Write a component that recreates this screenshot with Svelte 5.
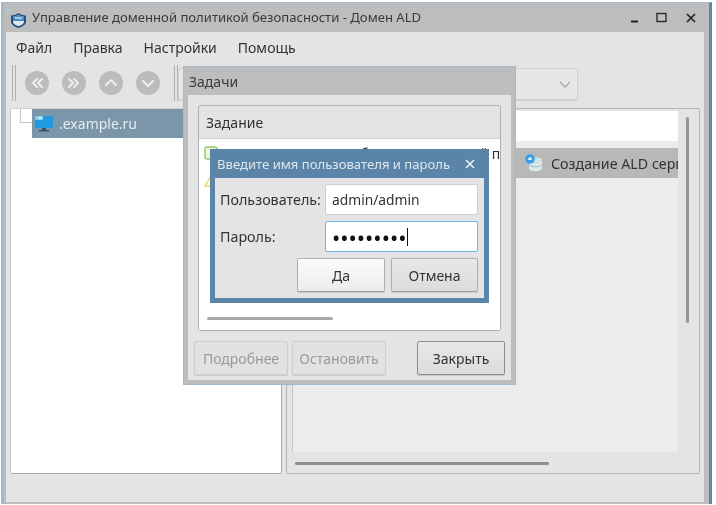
<script>
  const toolButtons = [
    'M12 8l-4 4 4 4M17 8l-4 4 4 4',
    'M7 8l4 4-4 4M12 8l4 4-4 4',
    'M7 14l5-5 5 5',
    'M7 10l5 5 5-5'
  ];
</script>

<div class="screen">
  <div class="window">
    <header class="titlebar">
      <svg class="app-icon" viewBox="0 0 22 22" width="22" height="22">
        <path d="M7 8.500c3 0 5.500-1 7.500-2.500 2 1.500 4.500 2.500 7.500 2.500v6c0 3-3 5-7.500 6.500C10 19.500 7 17.500 7 14.500z" fill="#254f80" />
        <path d="M9 9.500c2.500 0 4-.8 5.500-1.800 1.500 1 3 1.800 5.500 1.800v5c0 2-2 3.600-5.500 4.800C11 18.100 9 16.500 9 14.500z" fill="#dbe8f2" />
        <path d="M9 9.500c2.500 0 4-.8 5.500-1.800 1.500 1 3 1.800 5.500 1.800V14H9z" fill="#4a8cc4" />
        <path d="M11 11h7" stroke="#e8f1f8" stroke-width="1.200" />
        <path d="M3.500 1l.9 2 2.100.6-2.100.8-.9 2.100-.9-2.100L.5 3.600l2.100-.6z" fill="#9fd3ee" />
      </svg>
      <span class="title">Управление доменной политикой безопасности - Домен ALD</span>
      <div class="controls">
        <svg viewBox="0 0 12 12" width="12" height="12"><path d="M4 9.500h7" stroke="#222" stroke-width="2" /></svg>
        <svg viewBox="0 0 12 12" width="12" height="12"><rect x="1" y="1.500" width="9" height="8" fill="none" stroke="#222" stroke-width="1.300" /></svg>
        <svg viewBox="0 0 12 12" width="12" height="12"><path d="M2 2l8 8M10 2l-8 8" stroke="#222" stroke-width="1.700" /></svg>
      </div>
    </header>

    <div class="content">
      <nav class="menu">
        <span>Файл</span><span>Правка</span><span>Настройки</span><span>Помощь</span>
      </nav>

      <div class="toolbar">
        <i class="handle"></i>
        <div class="tool-buttons">
          {#each toolButtons as d}
            <svg viewBox="0 0 24 24" width="24" height="24">
              <circle cx="12" cy="12" r="12" fill="#bcbcbc" />
              <path {d} fill="none" stroke="#eeeeee" stroke-width="2" stroke-linecap="round" stroke-linejoin="round" />
            </svg>
          {/each}
        </div>
        <i class="handle"></i>
        <div class="combo">
          <svg viewBox="0 0 12 7" width="12" height="7"><path d="M1 1l5 5 5-5" fill="none" stroke="#a8a8a8" stroke-width="1.300" /></svg>
        </div>
      </div>

      <div class="panes">
        <section class="tree">
          <div class="branch"></div>
          <div class="tree-row">
            <svg viewBox="0 0 18 18" width="18" height="18">
              <rect x="0" y="1" width="18" height="12" rx="1" fill="#1f9ade" />
              <rect x="0" y="1" width="8" height="4" fill="#7ccbf2" />
              <path d="M3 3h4M5 1.500v3" stroke="#e8f6fd" stroke-width="1" />
              <rect x="7" y="13" width="4" height="2" fill="#35536b" />
              <rect x="4" y="15" width="10" height="1.500" fill="#35536b" />
            </svg>
            <span>.example.ru</span>
          </div>
        </section>
        <section class="detail">
          <div class="viewport">
            <div class="row-blank"></div>
            <div class="row-selected">
              <svg viewBox="0 0 18 18" width="18" height="18">
                <ellipse cx="10.500" cy="6" rx="6.500" ry="2.700" fill="#d4e2e6" />
                <path d="M4 6v8.500c0 1.600 2.900 2.800 6.500 2.800s6.500-1.200 6.500-2.800V6c0 1.600-2.900 2.800-6.500 2.800S4 7.600 4 6z" fill="#dce8ea" />
                <path d="M4 10c0 1.600 2.900 2.800 6.500 2.800S17 11.600 17 10" fill="none" stroke="#a8bcc2" />
                <circle cx="5" cy="5" r="4.800" fill="#3a9fe8" />
                <path d="M5 2.800l2.400 3H2.600z" fill="#fff" />
              </svg>
              <span>Создание ALD серв</span>
            </div>
          </div>
          <div class="v-track"><i></i></div>
          <div class="h-track"><i></i></div>
        </section>
      </div>
    </div>
  </div>

  <div class="tasks">
    <div class="dialog-title">Задачи</div>
    <div class="tasks-body">
      <div class="group">
        <div class="group-head">Задание</div>
        <div class="group-list">
          <div class="task-row">
            <svg viewBox="0 0 14 14" width="14" height="14"><rect x="1" y="1" width="12" height="12" rx="2" fill="#eef6e4" stroke="#9cc86c" stroke-width="1.500" /></svg>
            <span>Дополнительная и обмен настроенной политики</span>
          </div>
          <div class="task-row">
            <svg viewBox="0 0 14 14" width="14" height="14"><path d="M7 2l6 10H1z" fill="#fff" stroke="#ecd25a" stroke-width="1.300" /></svg>
          </div>
          <div class="task-scroll"><i></i></div>
        </div>
      </div>
      <div class="task-buttons">
        <button class="btn off">Подробнее</button>
        <button class="btn off">Остановить</button>
        <button class="btn close">Закрыть</button>
      </div>
    </div>
  </div>

  <div class="login">
    <div class="login-title">
      <span>Введите имя пользователя и пароль</span>
      <svg viewBox="0 0 12 12" width="12" height="12"><path d="M2 2l8 8M10 2l-8 8" stroke="#f2f6f9" stroke-width="1.500" /></svg>
    </div>
    <div class="login-body">
      <div class="field">
        <span class="label">Пользователь:</span>
        <div class="input">admin/admin</div>
      </div>
      <div class="field">
        <span class="label">Пароль:</span>
        <div class="input focus"><span class="dots">•••••••••</span><i class="caret"></i></div>
      </div>
      <div class="login-buttons">
        <button class="btn light">Да</button>
        <button class="btn">Отмена</button>
      </div>
    </div>
  </div>
</div>

<style>
  :global(body) {
    margin: 0;
    background: #fff;
  }
  .screen {
    position: relative;
    width: 716px;
    height: 505px;
    overflow: hidden;
    padding: 2px 4px 0 1px;
    box-sizing: border-box;
    font-family: "Noto Sans", sans-serif;
    font-size: 14px;
    color: #333;
    filter: blur(0.45px);
  }
  .window {
    height: 502px;
    box-sizing: border-box;
    background: #bdbdbd;
    border: 1px solid #a4bacb;
    border-left: 3px solid #a4bacb;
    border-right: 3px solid #5d88aa;
    border-bottom: none;
    display: flex;
    flex-direction: column;
  }
  .titlebar {
    height: 29px;
    flex: none;
    display: flex;
    align-items: center;
    padding-right: 12px;
    gap: 6px;
  }
  .app-icon {
    flex: none;
  }
  .title {
    flex: 1;
    white-space: nowrap;
    font-size: 13.080px;
    color: #3a3a3a;
    margin-top: -1px;
  }
  .controls {
    display: flex;
    gap: 17px;
    align-items: center;
  }
  .content {
    flex: 1;
    background: #e4e4e4;
    margin: 0 5px 2px 2px;
    display: flex;
    flex-direction: column;
  }
  .menu {
    height: 30px;
    flex: none;
    display: flex;
    align-items: center;
    padding-left: 10px;
    gap: 21px;
  }
  .toolbar {
    height: 41px;
    flex: none;
    display: flex;
    align-items: center;
    padding-left: 6px;
    margin-bottom: 5px;
  }
  .handle {
    width: 2px;
    height: 36px;
    border-left: 1px solid #b0b0b0;
    border-right: 1px solid #b0b0b0;
    flex: none;
  }
  .tool-buttons {
    display: flex;
    gap: 13px;
    padding: 0 14px 0 9px;
  }
  .combo {
    width: 400px;
    height: 32px;
    margin-top: 3px;
    box-sizing: border-box;
    border: 1px solid #d2d2d2;
    border-radius: 3px;
    background: #e7e7e7;
    display: flex;
    align-items: center;
    justify-content: flex-end;
    padding-right: 6px;
    box-shadow: 0 1px 1px #ccc;
  }
  .panes {
    display: flex;
    gap: 4px;
    height: 366px;
    padding: 0 4px;
    flex: none;
  }
  .tree {
    position: relative;
    width: 272px;
    flex: none;
    background: #fff;
    border-bottom: 1px solid #aaa;
    border-right: 1px solid #aaa;
    border-left: 1px solid #c4c4c4;
    border-top: 1px solid #d0d0d0;
    border-radius: 2px;
    box-sizing: border-box;
  }
  .branch {
    position: absolute;
    left: 9px;
    top: 0;
    width: 11px;
    height: 13px;
    border-left: 1px solid #c4c4c4;
    border-bottom: 1px solid #c4c4c4;
  }
  .tree-row {
    margin-left: 21px;
    height: 29px;
    background: #7b95a9;
    color: #e6edf2;
    display: flex;
    align-items: center;
    gap: 6px;
    padding-left: 3px;
  }
  .tree-row svg,
  .row-selected svg,
  .task-row svg {
    flex: none;
  }
  .detail {
    flex: 1;
    position: relative;
    box-sizing: border-box;
    border: 1px solid #b5b5b5;
    border-radius: 2px;
    padding: 2px 0 0 5px;
    background: #e4e4e4;
  }
  .viewport {
    width: 386px;
    height: 341px;
    background: #ececec;
    border-left: 1px solid #c4c4c4;
    box-sizing: border-box;
  }
  .row-blank {
    height: 30px;
    background: #fff;
  }
  .row-selected {
    margin-top: 7px;
    height: 30px;
    background: #b8b8b8;
    display: flex;
    align-items: center;
    padding-left: 232px;
    gap: 8px;
    white-space: nowrap;
    overflow: hidden;
    font-size: 14.250px;
  }
  .v-track {
    position: absolute;
    right: 10px;
    top: 8px;
  }
  .v-track i {
    display: block;
    width: 3px;
    height: 206px;
    border-radius: 2px;
    background: #959595;
  }
  .h-track {
    position: absolute;
    left: 8px;
    bottom: 8px;
  }
  .h-track i {
    display: block;
    width: 254px;
    height: 3px;
    border-radius: 2px;
    background: #8f8f8f;
  }
  .tasks {
    position: absolute;
    left: 183px;
    top: 66px;
    width: 333px;
    height: 319px;
    box-sizing: border-box;
    background: #bdbdbd;
    border: 1px solid #a4bacb;
    display: flex;
    flex-direction: column;
    padding: 0 4px 4px;
  }
  .dialog-title {
    height: 28px;
    flex: none;
    display: flex;
    align-items: center;
    padding-left: 1px;
    color: #3a3a3a;
  }
  .tasks-body {
    flex: 1;
    background: #e4e4e4;
    padding: 10px 6px 5px;
    display: flex;
    flex-direction: column;
    gap: 10px;
  }
  .group {
    margin: 0 4px;
    height: 226px;
    box-sizing: border-box;
    flex: none;
    border: 1px solid #b0b0b0;
    border-radius: 2px;
    display: flex;
    flex-direction: column;
  }
  .group-head {
    height: 32px;
    flex: none;
    display: flex;
    align-items: center;
    padding-left: 7px;
    border-bottom: 1px solid #d0d0d0;
  }
  .group-list {
    flex: 1;
    background: #fff;
    overflow: hidden;
    padding-left: 5px;
    display: flex;
    flex-direction: column;
    position: relative;
  }
  .task-row {
    height: 28px;
    flex: none;
    display: flex;
    align-items: center;
    gap: 3px;
    white-space: nowrap;
  }
  .task-scroll {
    position: absolute;
    left: 8px;
    bottom: 10px;
  }
  .task-scroll i {
    display: block;
    width: 126px;
    height: 3px;
    border-radius: 2px;
    background: #a8a8a8;
  }
  .task-buttons {
    display: flex;
    gap: 4px;
  }
  .btn {
    font: inherit;
    color: #333;
    height: 34px;
    box-sizing: border-box;
    border: 1px solid #b0b0b0;
    border-bottom-color: #9c9c9c;
    border-radius: 2px;
    background: linear-gradient(#e8e8e8, #dcdcdc);
    padding: 0;
    box-shadow: 0 1px 1px #c8c8c8;
  }
  .btn.off {
    width: 94px;
    color: #9a9a9a;
    border-color: #cdcdcd;
    background: #e2e2e2;
  }
  .btn.close {
    width: 88px;
    margin-left: auto;
    border-color: #8e8e8e;
  }
  .btn.light {
    background: linear-gradient(#fbfbfb, #ececec);
    width: 88px;
  }
  .login {
    position: absolute;
    left: 210px;
    top: 149px;
    width: 279px;
    height: 154px;
    box-sizing: border-box;
    background: #5a85a8;
    padding: 0 5px 5px;
    display: flex;
    flex-direction: column;
  }
  .login-title {
    height: 29px;
    flex: none;
    display: flex;
    align-items: center;
    justify-content: space-between;
    padding: 0 8px 0 2px;
    color: #dbe6ee;
    font-size: 13.100px;
  }
  .login-body {
    flex: 1;
    background: #e4e4e4;
    padding: 6px 6px 0 5px;
    display: flex;
    flex-direction: column;
  }
  .field {
    display: flex;
    align-items: center;
    height: 31px;
    margin-bottom: 6px;
    gap: 4px;
  }
  .label {
    width: 101px;
    flex: none;
    white-space: nowrap;
    font-size: 14.300px;
  }
  .input {
    width: 153px;
    flex: none;
    height: 31px;
    box-sizing: border-box;
    background: #fff;
    border: 1px solid #cfcfcf;
    border-radius: 2px;
    display: flex;
    align-items: center;
    padding-left: 6px;
    font-size: 13.800px;
  }
  .input.focus {
    border-color: #6fb9e6;
  }
  .dots {
    color: #111;
    font-size: 22px;
    line-height: 1;
  }
  .caret {
    width: 1px;
    height: 18px;
    background: #111;
    margin-left: 1px;
  }
  .login-buttons {
    display: flex;
    justify-content: flex-end;
    gap: 6px;
  }
  .login-buttons .btn:last-child {
    width: 87px;
  }
</style>
